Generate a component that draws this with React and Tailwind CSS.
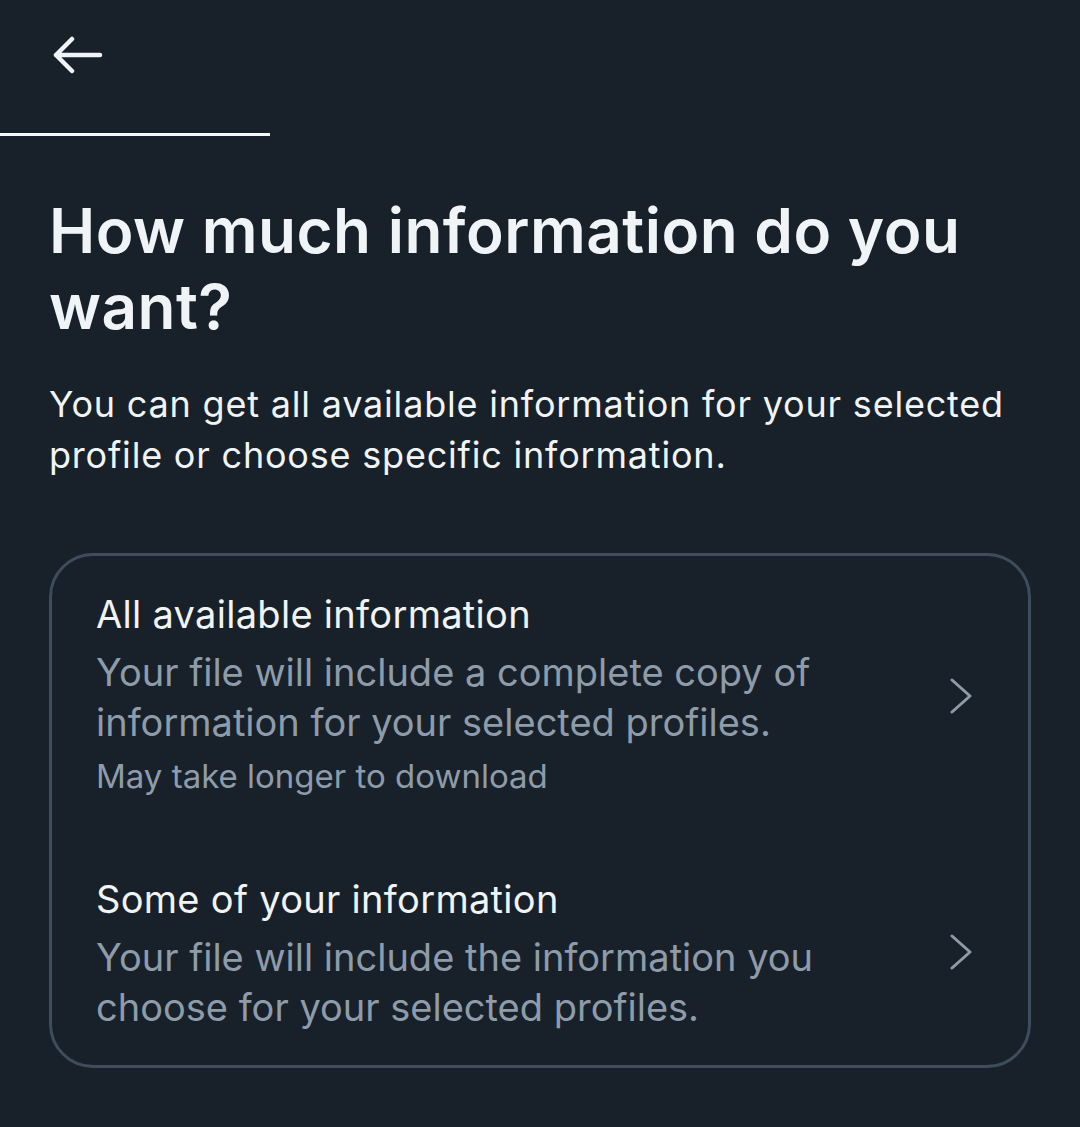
import React from 'react';

function Chevron() {
  return (
    <svg width="24" height="36" viewBox="0 0 24 36" fill="none" className="shrink-0">
      <path d="M2 2 L20 18 L2 34" stroke="#8e9caa" strokeWidth="3" strokeLinecap="round" strokeLinejoin="round" />
    </svg>
  );
}

function Option({ title, lines, note }) {
  return (
    <div className="flex items-center pl-[44px] pr-[54px]">
      <div className="flex-1">
        <div className="text-[38px] leading-[54px] tracking-[0.3px] text-[#f1f4f7]">{title}</div>
        <div className="mt-[6px] text-[38px] leading-[50px] text-[#8e9caa]">
          {lines.map((l) => (
            <div key={l}>{l}</div>
          ))}
        </div>
        {note && <div className="text-[33px] leading-[58px] text-[#8e9caa]">{note}</div>}
      </div>
      <Chevron />
    </div>
  );
}

export default function App() {
  return (
    <div className="w-[1080px] min-h-[1127px] bg-[#18212a] font-['Inter',sans-serif]">
      {/* top bar */}
      <div className="h-[110px] flex items-center pl-[53px]">
        <svg width="50" height="40" viewBox="0 0 50 40" fill="none">
          <path d="M3 20 H47 M19 4 L3 20 L19 36" stroke="#f1f4f7" strokeWidth="4.5" strokeLinecap="round" strokeLinejoin="round" />
        </svg>
      </div>
      <div className="mt-[23px] w-[270px] h-[3px] bg-[#f5f7f9]" />

      <div className="px-[49px]">
        <h1 className="mt-[57px] text-[62px] leading-[76px] font-semibold text-[#f1f4f7] tracking-[0.5px]">
          How much information do you want?
        </h1>
        <p className="mt-[34px] text-[36px] leading-[51px] tracking-[0.8px] text-[#f1f4f7]">
          You can get all available information for your selected profile or choose specific information.
        </p>

        <div className="mt-[72px] border-[3px] border-[#3e4d5d] rounded-[44px] pt-[31px] pb-[33px]">
          <Option
            title="All available information"
            lines={['Your file will include a complete copy of', 'information for your selected profiles.']}
            note="May take longer to download"
          />
          <div className="h-[67px]" />
          <Option
            title="Some of your information"
            lines={['Your file will include the information you', 'choose for your selected profiles.']}
          />
        </div>
      </div>
    </div>
  );
}
